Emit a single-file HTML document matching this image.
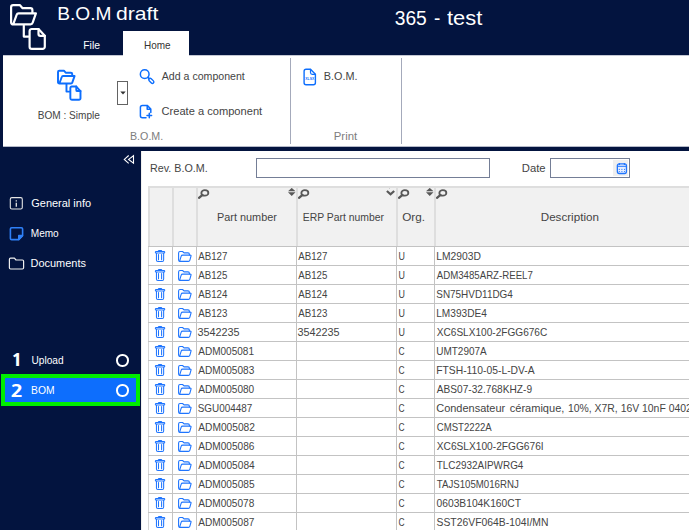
<!DOCTYPE html>
<html><head><meta charset="utf-8"><title>B.O.M draft</title>
<style>
html,body{margin:0;padding:0}
body{width:689px;height:530px;overflow:hidden;background:#03143f;position:relative;font-family:"Liberation Sans",sans-serif;}
.a{position:absolute;display:block}
.t{position:absolute;white-space:nowrap;transform-origin:0 50%;}
</style></head><body>
<!-- active tab -->
<div class="a" style="left:123px;top:31px;width:66px;height:25px;background:#fff"></div>
<!-- ribbon -->
<div class="a" style="left:3px;top:55px;width:686px;height:92px;background:#fff;box-sizing:border-box;border-top:1px solid #c4c8d4;border-bottom:1px solid #b4b9c8"></div>
<div class="a" style="left:123px;top:55px;width:66px;height:1px;background:#fff"></div>
<div class="a" style="left:290px;top:58px;width:1px;height:86px;background:#a4aabb"></div>
<div class="a" style="left:401px;top:58px;width:1px;height:86px;background:#a4aabb"></div>
<!-- dropdown button -->
<div class="a" style="left:117px;top:81px;width:11px;height:24px;box-sizing:border-box;border:1px solid #636363;background:#fff"></div>
<svg class="a" style="left:119.600px;top:91px" width="6" height="4" viewBox="0 0 6 4"><path d="M.3 .6h5.400L3 3.400z" fill="#333"/></svg>
<!-- main content -->
<div class="a" style="left:141px;top:151px;width:548px;height:379px;background:#fff;box-sizing:border-box;border-left:1px solid #f0f0ee"></div>
<div class="a" style="left:256px;top:158px;width:234px;height:20px;box-sizing:border-box;border:1px solid #747e96;background:#fff"></div>
<div class="a" style="left:550px;top:158px;width:80px;height:20px;box-sizing:border-box;border:1px solid #747e96;background:#fff"></div>
<div class="a" style="left:613px;top:160px;width:15px;height:16px;background:#efefef"></div>
<!-- table header -->
<div class="a" style="left:148px;top:186px;width:541px;height:60px;background:#dedede"></div>
<div class="a" style="left:150px;top:188px;width:22px;height:58px;background:#f1f1f1"></div>
<div class="a" style="left:174px;top:188px;width:22px;height:58px;background:#f1f1f1"></div>
<div class="a" style="left:198px;top:188px;width:98px;height:58px;background:#f1f1f1"></div>
<div class="a" style="left:298px;top:188px;width:98px;height:58px;background:#f1f1f1"></div>
<div class="a" style="left:398px;top:188px;width:36px;height:58px;background:#f1f1f1"></div>
<div class="a" style="left:436px;top:188px;width:253px;height:58px;background:#f1f1f1"></div>
<div class="a" style="left:148px;top:246px;width:1px;height:284px;background:#d6d6d6"></div>
<div class="a" style="left:172px;top:246px;width:1px;height:284px;background:#c3c3c3"></div>
<div class="a" style="left:196px;top:246px;width:1px;height:284px;background:#c3c3c3"></div>
<div class="a" style="left:296px;top:246px;width:1px;height:284px;background:#c3c3c3"></div>
<div class="a" style="left:396px;top:246px;width:1px;height:284px;background:#c3c3c3"></div>
<div class="a" style="left:434px;top:246px;width:1px;height:284px;background:#c3c3c3"></div>
<div class="a" style="left:148px;top:246px;width:541px;height:1px;background:#c3c3c3"></div>
<div class="a" style="left:148px;top:265px;width:541px;height:1px;background:#c3c3c3"></div>
<div class="a" style="left:148px;top:284px;width:541px;height:1px;background:#c3c3c3"></div>
<div class="a" style="left:148px;top:303px;width:541px;height:1px;background:#c3c3c3"></div>
<div class="a" style="left:148px;top:322px;width:541px;height:1px;background:#c3c3c3"></div>
<div class="a" style="left:148px;top:341px;width:541px;height:1px;background:#c3c3c3"></div>
<div class="a" style="left:148px;top:360px;width:541px;height:1px;background:#c3c3c3"></div>
<div class="a" style="left:148px;top:379px;width:541px;height:1px;background:#c3c3c3"></div>
<div class="a" style="left:148px;top:398px;width:541px;height:1px;background:#c3c3c3"></div>
<div class="a" style="left:148px;top:417px;width:541px;height:1px;background:#c3c3c3"></div>
<div class="a" style="left:148px;top:436px;width:541px;height:1px;background:#c3c3c3"></div>
<div class="a" style="left:148px;top:455px;width:541px;height:1px;background:#c3c3c3"></div>
<div class="a" style="left:148px;top:474px;width:541px;height:1px;background:#c3c3c3"></div>
<div class="a" style="left:148px;top:493px;width:541px;height:1px;background:#c3c3c3"></div>
<div class="a" style="left:148px;top:512px;width:541px;height:1px;background:#c3c3c3"></div>
<div class="a" style="left:148px;top:531px;width:541px;height:1px;background:#c3c3c3"></div>
<!-- sidebar selection -->
<div class="a" style="left:1px;top:374px;width:139px;height:32px;box-sizing:border-box;border:4px solid #00ee00;background:#0d6efd"></div>
<div class="a" style="left:116.400px;top:354.400px;width:12.400px;height:12.400px;box-sizing:border-box;border:2px solid #fff;border-radius:50%"></div>
<div class="a" style="left:116.400px;top:384.200px;width:12.400px;height:12.400px;box-sizing:border-box;border:2px solid #fff;border-radius:50%"></div>
<svg class="a" style="left:0;top:0" width="120" height="110" viewBox="0 0 120 110" fill="none" stroke="#fff" stroke-width="2.2" stroke-linejoin="round" stroke-linecap="round"><g transform="translate(0 0) scale(1)">
<path d="M32.4 12.3 V10.2 a2 2 0 0 0 -2 -2 H22.6 L20 5.200 H13.100 a2 2 0 0 0 -2 2 V22.400 a2 2 0 0 0 2.100 2 L16.700 14.700 a2 2 0 0 1 1.900 -1.400 H35.900 L32.600 22.800 a2.200 2.200 0 0 1 -2.100 1.600 H13.200"/>
<path d="M23.800 25.500 V36.600 H28.500"/>
<path d="M38.500 29 H31.800 a2.200 2.200 0 0 0 -2.200 2.200 V46.700 a2.200 2.200 0 0 0 2.200 2.200 H42.600 a2.200 2.200 0 0 0 2.200 -2.200 V35.800 Z"/>
<path d="M38.500 29 V34 a1.800 1.800 0 0 0 1.800 1.800 H44.800"/>
</g></svg>
<svg class="a" style="left:0;top:0" width="120" height="110" viewBox="0 0 120 110" fill="none" stroke="#0d6efd" stroke-width="2.9" stroke-linejoin="round" stroke-linecap="round"><g transform="translate(50.6 67.2) scale(0.667)">
<path d="M32.4 12.3 V10.2 a2 2 0 0 0 -2 -2 H22.6 L20 5.200 H13.100 a2 2 0 0 0 -2 2 V22.400 a2 2 0 0 0 2.100 2 L16.700 14.700 a2 2 0 0 1 1.900 -1.400 H35.900 L32.600 22.800 a2.200 2.200 0 0 1 -2.100 1.600 H13.200"/>
<path d="M23.800 25.500 V36.600 H28.500"/>
<path d="M38.500 29 H31.800 a2.200 2.200 0 0 0 -2.200 2.200 V46.700 a2.200 2.200 0 0 0 2.200 2.200 H42.600 a2.200 2.200 0 0 0 2.200 -2.200 V35.800 Z"/>
<path d="M38.500 29 V34 a1.800 1.800 0 0 0 1.800 1.800 H44.800"/>
</g></svg>
<svg class="a" style="left:137.500px;top:68px" width="18" height="18" viewBox="0 0 18 18" fill="none" stroke="#0d6efd" stroke-width="1.500" stroke-linecap="round"><circle cx="6.700" cy="6.200" r="4.350"/><path d="M9.900 9.400l1.300 1.300" stroke-width="1.700"/><rect x="-3" y="-1.450" width="6" height="2.900" rx="1.450" stroke-width="1.400" transform="translate(13.300 12.800) rotate(45)"/></svg>
<svg class="a" style="left:139px;top:104px" width="15" height="16" viewBox="0 0 15 16" fill="none" stroke="#0d6efd" stroke-width="1.500" stroke-linecap="round" stroke-linejoin="round"><path d="M7 13.800H3.400c-1.200 0-2-.8-2-2V3.400c0-1.200.8-2 2-2h4.800l3.600 3.600v3.400M8.200 1.600v3.600h3.400M10.300 9.200v4.600M8 11.500h4.600"/></svg>
<svg class="a" style="left:302px;top:67.500px" width="16" height="18" viewBox="0 0 16 18" fill="none" stroke="#0d6efd" stroke-width="1.400" stroke-linecap="round" stroke-linejoin="round"><path d="M8.500 1.300H4.100c-1.300 0-2 .7-2 2V14.700c0 1.300.7 2 2 2h7.300c1.300 0 2-.7 2-2V6.300z"/><path d="M8.500 1.300v3.200c0 1.200.6 1.800 1.800 1.800h3.100" stroke-width="1.200"/><text x="3.300" y="12" font-family="Liberation Sans, sans-serif" font-size="3.600" font-weight="bold" fill="#0d6efd" stroke="none" textLength="8.900" lengthAdjust="spacingAndGlyphs">XLSX</text></svg>
<svg class="a" style="left:123px;top:154px" width="12" height="11" viewBox="0 0 12 11" fill="none" stroke="#fff" stroke-width="1.100" stroke-linejoin="miter"><path d="M5.700 1.500L1.300 5.400L5.700 9.300"/><path d="M10.500 1.700L5.600 5.400L10.500 9.100z"/></svg>
<svg class="a" style="left:9px;top:196px" width="15" height="15" viewBox="0 0 15 15" fill="none" stroke="#e4e4e4" stroke-width="1.100"><rect x="1.300" y="1.600" width="12" height="11.400" rx="1.600"/><path d="M7.300 4.300v1.200M7.300 6.800v4" stroke-width="1.300"/></svg>
<svg class="a" style="left:9px;top:226px" width="15" height="15" viewBox="0 0 15 15" fill="none" stroke="#2f80f7" stroke-width="1.600" stroke-linejoin="round"><path d="M2.600 1.800h9.800c.8 0 1.200.4 1.200 1.200v6.600l-4 4H2.600c-.8 0-1.200-.4-1.200-1.200V3c0-.8.4-1.200 1.200-1.200z"/><path d="M13.400 9.600H9.800v3.800z" fill="#2f80f7"/></svg>
<svg class="a" style="left:8px;top:256px" width="17" height="14" viewBox="0 0 17 14" fill="none" stroke="#f0f0f0" stroke-width="1.200" stroke-linejoin="round"><path d="M1.400 3.400c0-.8.400-1.200 1.200-1.200h3.800l1.600 1.800h6.400c.8 0 1.200.4 1.200 1.200v6.600c0 .8-.4 1.200-1.200 1.200H2.600c-.8 0-1.200-.4-1.200-1.200z"/></svg>
<svg class="a" style="left:615px;top:161px" width="14" height="15" viewBox="0 0 14 15" fill="none" stroke="#1f75fe" stroke-linecap="round"><rect x="2.350" y="2.800" width="9.100" height="9.700" rx="1.900" stroke-width="1.300" fill="#e6eeff"/><path d="M2.600 5.300h8.600" stroke-width="1"/><path d="M4.400 2.500v1M9.400 2.500v1" stroke-width="1.200"/><g fill="#1f75fe" stroke="none"><circle cx="4.300" cy="8.300" r=".6"/><circle cx="6.900" cy="8.300" r=".6"/><circle cx="9.500" cy="8.300" r=".6"/><circle cx="4.300" cy="10.500" r=".6"/><circle cx="6.900" cy="10.500" r=".6"/><circle cx="9.500" cy="10.500" r=".6"/></g></svg>
<svg class="a" style="left:154px;top:249px" width="12" height="14" viewBox="0 0 12 14" fill="none" stroke="#1f75fe" stroke-width="1.050" stroke-linecap="round" stroke-linejoin="round"><path d="M4.300 2.500v-.2c0-.5.300-.8.800-.8h1.900c.5 0 .8.300.8.800v.2"/><rect x="1.350" y="2.550" width="9.400" height="1.500" rx=".75"/><path d="M2.450 4.300V11.100c0 .9.500 1.400 1.400 1.400h4.400c.9 0 1.400-.5 1.400-1.400V4.300M4.500 5.600v5.200M7.600 5.600v5.200"/></svg>
<svg class="a" style="left:177px;top:249px" width="16" height="14" viewBox="0 0 16 14" fill="none" stroke="#1f75fe" stroke-width="1.100" stroke-linecap="round" stroke-linejoin="round"><path d="M3 12.400c-.9 0-1.400-.5-1.400-1.400V3.900c0-.9.5-1.400 1.400-1.400h2.600l1.400 1.400h4c.9 0 1.400.5 1.400 1.400v.7"/><path d="M3 12.400h8.400c.8 0 1.200-.3 1.400-1l1.200-4.200c.2-.7-.1-1.100-.8-1.100H5.600c-.8 0-1.200.3-1.400 1L2.700 11.800"/></svg>
<svg class="a" style="left:154px;top:268px" width="12" height="14" viewBox="0 0 12 14" fill="none" stroke="#1f75fe" stroke-width="1.050" stroke-linecap="round" stroke-linejoin="round"><path d="M4.300 2.500v-.2c0-.5.300-.8.800-.8h1.900c.5 0 .8.300.8.800v.2"/><rect x="1.350" y="2.550" width="9.400" height="1.500" rx=".75"/><path d="M2.450 4.300V11.100c0 .9.500 1.400 1.400 1.400h4.400c.9 0 1.400-.5 1.400-1.400V4.300M4.500 5.600v5.200M7.600 5.600v5.200"/></svg>
<svg class="a" style="left:177px;top:268px" width="16" height="14" viewBox="0 0 16 14" fill="none" stroke="#1f75fe" stroke-width="1.100" stroke-linecap="round" stroke-linejoin="round"><path d="M3 12.400c-.9 0-1.400-.5-1.400-1.400V3.900c0-.9.5-1.400 1.400-1.400h2.600l1.400 1.400h4c.9 0 1.400.5 1.400 1.400v.7"/><path d="M3 12.400h8.400c.8 0 1.200-.3 1.400-1l1.200-4.200c.2-.7-.1-1.100-.8-1.100H5.600c-.8 0-1.200.3-1.400 1L2.700 11.800"/></svg>
<svg class="a" style="left:154px;top:287px" width="12" height="14" viewBox="0 0 12 14" fill="none" stroke="#1f75fe" stroke-width="1.050" stroke-linecap="round" stroke-linejoin="round"><path d="M4.300 2.500v-.2c0-.5.300-.8.800-.8h1.900c.5 0 .8.300.8.800v.2"/><rect x="1.350" y="2.550" width="9.400" height="1.500" rx=".75"/><path d="M2.450 4.300V11.100c0 .9.500 1.400 1.400 1.400h4.400c.9 0 1.400-.5 1.400-1.400V4.300M4.500 5.600v5.200M7.600 5.600v5.200"/></svg>
<svg class="a" style="left:177px;top:287px" width="16" height="14" viewBox="0 0 16 14" fill="none" stroke="#1f75fe" stroke-width="1.100" stroke-linecap="round" stroke-linejoin="round"><path d="M3 12.400c-.9 0-1.400-.5-1.400-1.400V3.900c0-.9.5-1.400 1.400-1.400h2.600l1.400 1.400h4c.9 0 1.400.5 1.400 1.400v.7"/><path d="M3 12.400h8.400c.8 0 1.200-.3 1.400-1l1.200-4.200c.2-.7-.1-1.100-.8-1.100H5.600c-.8 0-1.200.3-1.400 1L2.700 11.800"/></svg>
<svg class="a" style="left:154px;top:306px" width="12" height="14" viewBox="0 0 12 14" fill="none" stroke="#1f75fe" stroke-width="1.050" stroke-linecap="round" stroke-linejoin="round"><path d="M4.300 2.500v-.2c0-.5.300-.8.800-.8h1.900c.5 0 .8.300.8.800v.2"/><rect x="1.350" y="2.550" width="9.400" height="1.500" rx=".75"/><path d="M2.450 4.300V11.100c0 .9.500 1.400 1.400 1.400h4.400c.9 0 1.400-.5 1.400-1.400V4.300M4.500 5.600v5.200M7.600 5.600v5.200"/></svg>
<svg class="a" style="left:177px;top:306px" width="16" height="14" viewBox="0 0 16 14" fill="none" stroke="#1f75fe" stroke-width="1.100" stroke-linecap="round" stroke-linejoin="round"><path d="M3 12.400c-.9 0-1.400-.5-1.400-1.400V3.900c0-.9.5-1.400 1.400-1.400h2.600l1.400 1.400h4c.9 0 1.400.5 1.400 1.400v.7"/><path d="M3 12.400h8.400c.8 0 1.200-.3 1.400-1l1.200-4.200c.2-.7-.1-1.100-.8-1.100H5.600c-.8 0-1.200.3-1.400 1L2.700 11.800"/></svg>
<svg class="a" style="left:154px;top:325px" width="12" height="14" viewBox="0 0 12 14" fill="none" stroke="#1f75fe" stroke-width="1.050" stroke-linecap="round" stroke-linejoin="round"><path d="M4.300 2.500v-.2c0-.5.300-.8.800-.8h1.900c.5 0 .8.300.8.800v.2"/><rect x="1.350" y="2.550" width="9.400" height="1.500" rx=".75"/><path d="M2.450 4.300V11.100c0 .9.500 1.400 1.400 1.400h4.400c.9 0 1.400-.5 1.400-1.400V4.300M4.500 5.600v5.200M7.600 5.600v5.200"/></svg>
<svg class="a" style="left:177px;top:325px" width="16" height="14" viewBox="0 0 16 14" fill="none" stroke="#1f75fe" stroke-width="1.100" stroke-linecap="round" stroke-linejoin="round"><path d="M3 12.400c-.9 0-1.400-.5-1.400-1.400V3.900c0-.9.5-1.400 1.400-1.400h2.600l1.400 1.400h4c.9 0 1.400.5 1.400 1.400v.7"/><path d="M3 12.400h8.400c.8 0 1.200-.3 1.400-1l1.200-4.200c.2-.7-.1-1.100-.8-1.100H5.600c-.8 0-1.200.3-1.400 1L2.700 11.800"/></svg>
<svg class="a" style="left:154px;top:344px" width="12" height="14" viewBox="0 0 12 14" fill="none" stroke="#1f75fe" stroke-width="1.050" stroke-linecap="round" stroke-linejoin="round"><path d="M4.300 2.500v-.2c0-.5.300-.8.800-.8h1.900c.5 0 .8.300.8.800v.2"/><rect x="1.350" y="2.550" width="9.400" height="1.500" rx=".75"/><path d="M2.450 4.300V11.100c0 .9.500 1.400 1.400 1.400h4.400c.9 0 1.400-.5 1.400-1.400V4.300M4.500 5.600v5.200M7.600 5.600v5.200"/></svg>
<svg class="a" style="left:177px;top:344px" width="16" height="14" viewBox="0 0 16 14" fill="none" stroke="#1f75fe" stroke-width="1.100" stroke-linecap="round" stroke-linejoin="round"><path d="M3 12.400c-.9 0-1.400-.5-1.400-1.400V3.900c0-.9.5-1.400 1.400-1.400h2.600l1.400 1.400h4c.9 0 1.400.5 1.400 1.400v.7"/><path d="M3 12.400h8.400c.8 0 1.200-.3 1.400-1l1.200-4.200c.2-.7-.1-1.100-.8-1.100H5.600c-.8 0-1.200.3-1.400 1L2.700 11.800"/></svg>
<svg class="a" style="left:154px;top:363px" width="12" height="14" viewBox="0 0 12 14" fill="none" stroke="#1f75fe" stroke-width="1.050" stroke-linecap="round" stroke-linejoin="round"><path d="M4.300 2.500v-.2c0-.5.300-.8.800-.8h1.900c.5 0 .8.300.8.800v.2"/><rect x="1.350" y="2.550" width="9.400" height="1.500" rx=".75"/><path d="M2.450 4.300V11.100c0 .9.500 1.400 1.400 1.400h4.400c.9 0 1.400-.5 1.400-1.400V4.300M4.500 5.600v5.200M7.600 5.600v5.200"/></svg>
<svg class="a" style="left:177px;top:363px" width="16" height="14" viewBox="0 0 16 14" fill="none" stroke="#1f75fe" stroke-width="1.100" stroke-linecap="round" stroke-linejoin="round"><path d="M3 12.400c-.9 0-1.400-.5-1.400-1.400V3.900c0-.9.5-1.400 1.400-1.400h2.600l1.400 1.400h4c.9 0 1.400.5 1.400 1.400v.7"/><path d="M3 12.400h8.400c.8 0 1.200-.3 1.400-1l1.200-4.200c.2-.7-.1-1.100-.8-1.100H5.600c-.8 0-1.200.3-1.400 1L2.700 11.800"/></svg>
<svg class="a" style="left:154px;top:382px" width="12" height="14" viewBox="0 0 12 14" fill="none" stroke="#1f75fe" stroke-width="1.050" stroke-linecap="round" stroke-linejoin="round"><path d="M4.300 2.500v-.2c0-.5.300-.8.800-.8h1.900c.5 0 .8.300.8.800v.2"/><rect x="1.350" y="2.550" width="9.400" height="1.500" rx=".75"/><path d="M2.450 4.300V11.100c0 .9.500 1.400 1.400 1.400h4.400c.9 0 1.400-.5 1.400-1.400V4.300M4.500 5.600v5.200M7.600 5.600v5.200"/></svg>
<svg class="a" style="left:177px;top:382px" width="16" height="14" viewBox="0 0 16 14" fill="none" stroke="#1f75fe" stroke-width="1.100" stroke-linecap="round" stroke-linejoin="round"><path d="M3 12.400c-.9 0-1.400-.5-1.400-1.400V3.900c0-.9.5-1.400 1.400-1.400h2.600l1.400 1.400h4c.9 0 1.400.5 1.400 1.400v.7"/><path d="M3 12.400h8.400c.8 0 1.200-.3 1.400-1l1.200-4.200c.2-.7-.1-1.100-.8-1.100H5.600c-.8 0-1.200.3-1.400 1L2.700 11.800"/></svg>
<svg class="a" style="left:154px;top:401px" width="12" height="14" viewBox="0 0 12 14" fill="none" stroke="#1f75fe" stroke-width="1.050" stroke-linecap="round" stroke-linejoin="round"><path d="M4.300 2.500v-.2c0-.5.300-.8.800-.8h1.900c.5 0 .8.300.8.800v.2"/><rect x="1.350" y="2.550" width="9.400" height="1.500" rx=".75"/><path d="M2.450 4.300V11.100c0 .9.500 1.400 1.400 1.400h4.400c.9 0 1.400-.5 1.400-1.400V4.300M4.500 5.600v5.200M7.600 5.600v5.200"/></svg>
<svg class="a" style="left:177px;top:401px" width="16" height="14" viewBox="0 0 16 14" fill="none" stroke="#1f75fe" stroke-width="1.100" stroke-linecap="round" stroke-linejoin="round"><path d="M3 12.400c-.9 0-1.400-.5-1.400-1.400V3.900c0-.9.5-1.400 1.400-1.400h2.600l1.400 1.400h4c.9 0 1.400.5 1.400 1.400v.7"/><path d="M3 12.400h8.400c.8 0 1.200-.3 1.400-1l1.200-4.200c.2-.7-.1-1.100-.8-1.100H5.600c-.8 0-1.200.3-1.400 1L2.700 11.800"/></svg>
<svg class="a" style="left:154px;top:420px" width="12" height="14" viewBox="0 0 12 14" fill="none" stroke="#1f75fe" stroke-width="1.050" stroke-linecap="round" stroke-linejoin="round"><path d="M4.300 2.500v-.2c0-.5.300-.8.800-.8h1.900c.5 0 .8.300.8.800v.2"/><rect x="1.350" y="2.550" width="9.400" height="1.500" rx=".75"/><path d="M2.450 4.300V11.100c0 .9.500 1.400 1.400 1.400h4.400c.9 0 1.400-.5 1.400-1.400V4.300M4.500 5.600v5.200M7.600 5.600v5.200"/></svg>
<svg class="a" style="left:177px;top:420px" width="16" height="14" viewBox="0 0 16 14" fill="none" stroke="#1f75fe" stroke-width="1.100" stroke-linecap="round" stroke-linejoin="round"><path d="M3 12.400c-.9 0-1.400-.5-1.400-1.400V3.900c0-.9.5-1.400 1.400-1.400h2.600l1.400 1.400h4c.9 0 1.400.5 1.400 1.400v.7"/><path d="M3 12.400h8.400c.8 0 1.200-.3 1.400-1l1.200-4.200c.2-.7-.1-1.100-.8-1.100H5.600c-.8 0-1.200.3-1.400 1L2.700 11.800"/></svg>
<svg class="a" style="left:154px;top:439px" width="12" height="14" viewBox="0 0 12 14" fill="none" stroke="#1f75fe" stroke-width="1.050" stroke-linecap="round" stroke-linejoin="round"><path d="M4.300 2.500v-.2c0-.5.300-.8.800-.8h1.900c.5 0 .8.300.8.800v.2"/><rect x="1.350" y="2.550" width="9.400" height="1.500" rx=".75"/><path d="M2.450 4.300V11.100c0 .9.500 1.400 1.400 1.400h4.400c.9 0 1.400-.5 1.400-1.400V4.300M4.500 5.600v5.200M7.600 5.600v5.200"/></svg>
<svg class="a" style="left:177px;top:439px" width="16" height="14" viewBox="0 0 16 14" fill="none" stroke="#1f75fe" stroke-width="1.100" stroke-linecap="round" stroke-linejoin="round"><path d="M3 12.400c-.9 0-1.400-.5-1.400-1.400V3.900c0-.9.5-1.400 1.400-1.400h2.600l1.400 1.400h4c.9 0 1.400.5 1.400 1.400v.7"/><path d="M3 12.400h8.400c.8 0 1.200-.3 1.400-1l1.200-4.200c.2-.7-.1-1.100-.8-1.100H5.600c-.8 0-1.200.3-1.400 1L2.700 11.800"/></svg>
<svg class="a" style="left:154px;top:458px" width="12" height="14" viewBox="0 0 12 14" fill="none" stroke="#1f75fe" stroke-width="1.050" stroke-linecap="round" stroke-linejoin="round"><path d="M4.300 2.500v-.2c0-.5.300-.8.800-.8h1.900c.5 0 .8.300.8.800v.2"/><rect x="1.350" y="2.550" width="9.400" height="1.500" rx=".75"/><path d="M2.450 4.300V11.100c0 .9.500 1.400 1.400 1.400h4.400c.9 0 1.400-.5 1.400-1.400V4.300M4.500 5.600v5.200M7.600 5.600v5.200"/></svg>
<svg class="a" style="left:177px;top:458px" width="16" height="14" viewBox="0 0 16 14" fill="none" stroke="#1f75fe" stroke-width="1.100" stroke-linecap="round" stroke-linejoin="round"><path d="M3 12.400c-.9 0-1.400-.5-1.400-1.400V3.900c0-.9.5-1.400 1.400-1.400h2.600l1.400 1.400h4c.9 0 1.400.5 1.400 1.400v.7"/><path d="M3 12.400h8.400c.8 0 1.200-.3 1.400-1l1.200-4.200c.2-.7-.1-1.100-.8-1.100H5.600c-.8 0-1.200.3-1.400 1L2.700 11.800"/></svg>
<svg class="a" style="left:154px;top:477px" width="12" height="14" viewBox="0 0 12 14" fill="none" stroke="#1f75fe" stroke-width="1.050" stroke-linecap="round" stroke-linejoin="round"><path d="M4.300 2.500v-.2c0-.5.300-.8.800-.8h1.900c.5 0 .8.300.8.800v.2"/><rect x="1.350" y="2.550" width="9.400" height="1.500" rx=".75"/><path d="M2.450 4.300V11.100c0 .9.500 1.400 1.400 1.400h4.400c.9 0 1.400-.5 1.400-1.400V4.300M4.500 5.600v5.200M7.600 5.600v5.200"/></svg>
<svg class="a" style="left:177px;top:477px" width="16" height="14" viewBox="0 0 16 14" fill="none" stroke="#1f75fe" stroke-width="1.100" stroke-linecap="round" stroke-linejoin="round"><path d="M3 12.400c-.9 0-1.400-.5-1.400-1.400V3.900c0-.9.5-1.400 1.400-1.400h2.600l1.400 1.400h4c.9 0 1.400.5 1.400 1.400v.7"/><path d="M3 12.400h8.400c.8 0 1.200-.3 1.400-1l1.200-4.200c.2-.7-.1-1.100-.8-1.100H5.600c-.8 0-1.200.3-1.400 1L2.700 11.800"/></svg>
<svg class="a" style="left:154px;top:496px" width="12" height="14" viewBox="0 0 12 14" fill="none" stroke="#1f75fe" stroke-width="1.050" stroke-linecap="round" stroke-linejoin="round"><path d="M4.300 2.500v-.2c0-.5.300-.8.800-.8h1.900c.5 0 .8.300.8.800v.2"/><rect x="1.350" y="2.550" width="9.400" height="1.500" rx=".75"/><path d="M2.450 4.300V11.100c0 .9.500 1.400 1.400 1.400h4.400c.9 0 1.400-.5 1.400-1.400V4.300M4.500 5.600v5.200M7.600 5.600v5.200"/></svg>
<svg class="a" style="left:177px;top:496px" width="16" height="14" viewBox="0 0 16 14" fill="none" stroke="#1f75fe" stroke-width="1.100" stroke-linecap="round" stroke-linejoin="round"><path d="M3 12.400c-.9 0-1.400-.5-1.400-1.400V3.900c0-.9.5-1.400 1.400-1.400h2.600l1.400 1.400h4c.9 0 1.400.5 1.400 1.400v.7"/><path d="M3 12.400h8.400c.8 0 1.200-.3 1.400-1l1.200-4.200c.2-.7-.1-1.100-.8-1.100H5.600c-.8 0-1.200.3-1.400 1L2.700 11.800"/></svg>
<svg class="a" style="left:154px;top:515px" width="12" height="14" viewBox="0 0 12 14" fill="none" stroke="#1f75fe" stroke-width="1.050" stroke-linecap="round" stroke-linejoin="round"><path d="M4.300 2.500v-.2c0-.5.300-.8.800-.8h1.900c.5 0 .8.300.8.800v.2"/><rect x="1.350" y="2.550" width="9.400" height="1.500" rx=".75"/><path d="M2.450 4.300V11.100c0 .9.500 1.400 1.400 1.400h4.400c.9 0 1.400-.5 1.400-1.400V4.300M4.500 5.600v5.200M7.600 5.600v5.200"/></svg>
<svg class="a" style="left:177px;top:515px" width="16" height="14" viewBox="0 0 16 14" fill="none" stroke="#1f75fe" stroke-width="1.100" stroke-linecap="round" stroke-linejoin="round"><path d="M3 12.400c-.9 0-1.400-.5-1.400-1.400V3.900c0-.9.5-1.400 1.400-1.400h2.600l1.400 1.400h4c.9 0 1.400.5 1.400 1.400v.7"/><path d="M3 12.400h8.400c.8 0 1.200-.3 1.400-1l1.200-4.200c.2-.7-.1-1.100-.8-1.100H5.600c-.8 0-1.200.3-1.400 1L2.700 11.800"/></svg>
<svg class="a" style="left:198px;top:189px" width="12" height="11" viewBox="0 0 12 11" fill="none" stroke="#585858"><ellipse cx="6.850" cy="3.900" rx="3.500" ry="2.800" stroke-width="1.800"/><path d="M4.500 5.900L1 8.900" stroke-width="2.200" stroke-linecap="round"/></svg>
<svg class="a" style="left:298px;top:189px" width="12" height="11" viewBox="0 0 12 11" fill="none" stroke="#585858"><ellipse cx="6.850" cy="3.900" rx="3.500" ry="2.800" stroke-width="1.800"/><path d="M4.500 5.900L1 8.900" stroke-width="2.200" stroke-linecap="round"/></svg>
<svg class="a" style="left:398px;top:189px" width="12" height="11" viewBox="0 0 12 11" fill="none" stroke="#585858"><ellipse cx="6.850" cy="3.900" rx="3.500" ry="2.800" stroke-width="1.800"/><path d="M4.500 5.900L1 8.900" stroke-width="2.200" stroke-linecap="round"/></svg>
<svg class="a" style="left:436px;top:189px" width="12" height="11" viewBox="0 0 12 11" fill="none" stroke="#585858"><ellipse cx="6.850" cy="3.900" rx="3.500" ry="2.800" stroke-width="1.800"/><path d="M4.500 5.900L1 8.900" stroke-width="2.200" stroke-linecap="round"/></svg>
<svg class="a" style="left:287.9px;top:188px" width="8" height="9" viewBox="0 0 8 9" fill="#585858"><path d="M3.750 -.1L7.500 3.150H0zM0 4.250H7.500L3.750 8z"/></svg>
<svg class="a" style="left:386px;top:188px" width="10" height="9" viewBox="0 0 10 9" fill="none" stroke="#585858" stroke-width="2.200" stroke-linecap="butt" stroke-linejoin="miter"><path d="M.9 3L4.550 6.300L8.200 3"/><circle cx="3.400" cy=".6" r=".45" fill="#999" stroke="none"/></svg>
<svg class="a" style="left:425.9px;top:188px" width="8" height="9" viewBox="0 0 8 9" fill="#585858"><path d="M3.750 -.1L7.500 3.150H0zM0 4.250H7.500L3.750 8z"/></svg>
<span class="t" id="t0" style="left:57px;top:3px;font-size:18.5px;line-height:22px;color:#fff;transform:translateX(0.25px) scaleX(1.0351);">B.O.M</span>
<span class="t" id="t1" style="left:116px;top:3px;font-size:18.5px;line-height:22px;color:#fff;transform:translateX(0px) scaleX(1.1426);">draft</span>
<span class="t" id="t2" style="left:394px;top:7px;font-size:19.5px;line-height:23px;color:#fff;transform:translateX(0.75px) scaleX(0.9853);">365</span>
<span class="t" id="t3" style="left:433px;top:7px;font-size:19.5px;line-height:23px;color:#fff;transform:translateX(1px) scaleX(0.9735);">-</span>
<span class="t" id="t4" style="left:447px;top:7px;font-size:19.5px;line-height:23px;color:#fff;transform:translateX(0px) scaleX(1.1231);">test</span>
<span class="t" id="t5" style="left:83px;top:39px;font-size:11px;line-height:13px;color:#fff;transform:translateX(0.25px) scaleX(0.9441);">File</span>
<span class="t" id="t6" style="left:143px;top:39px;font-size:11px;line-height:13px;color:#333;transform:translateX(1px) scaleX(0.9070);">Home</span>
<span class="t" id="t7" style="left:37px;top:109px;font-size:11px;line-height:13px;color:#444444;transform:translateX(0.75px) scaleX(0.9158);">BOM : Simple</span>
<span class="t" id="t8" style="left:161px;top:70px;font-size:11px;line-height:13px;color:#444444;transform:translateX(0.75px) scaleX(0.9632);">Add a component</span>
<span class="t" id="t9" style="left:161px;top:105px;font-size:11px;line-height:13px;color:#444444;transform:translateX(0.5px) scaleX(1.0098);">Create a component</span>
<span class="t" id="t10" style="left:129px;top:130px;font-size:11px;line-height:13px;color:#7d7d7d;transform:translateX(1px) scaleX(0.9708);">B.O.M.</span>
<span class="t" id="t11" style="left:323px;top:70px;font-size:11px;line-height:13px;color:#444444;transform:translateX(0.75px) scaleX(0.9847);">B.O.M.</span>
<span class="t" id="t12" style="left:333px;top:130px;font-size:11px;line-height:13px;color:#7d7d7d;transform:translateX(0.75px) scaleX(1.0361);">Print</span>
<span class="t" id="t13" style="left:31px;top:197px;font-size:11px;line-height:13px;color:#fff;transform:translateX(0.25px) scaleX(0.9977);">General info</span>
<span class="t" id="t14" style="left:30px;top:227px;font-size:11px;line-height:13px;color:#fff;transform:translateX(0.75px) scaleX(0.9152);">Memo</span>
<span class="t" id="t15" style="left:30px;top:257px;font-size:11px;line-height:13px;color:#fff;transform:translateX(0.5px) scaleX(0.9961);">Documents</span>
<span class="t" id="t16" style="left:10px;top:350px;font-size:17.5px;line-height:21px;color:#fff;font-weight:800;font-family:NanumGothic,'Liberation Sans',sans-serif;transform:translateX(1px) scaleX(1.1572);">1</span>
<span class="t" id="t17" style="left:31px;top:354px;font-size:11px;line-height:13px;color:#fff;transform:translateX(0.5px) scaleX(0.9210);">Upload</span>
<span class="t" id="t18" style="left:10px;top:381px;font-size:17.5px;line-height:21px;color:#fff;font-weight:800;font-family:NanumGothic,'Liberation Sans',sans-serif;transform:translateX(0.5px) scaleX(1.2032);">2</span>
<span class="t" id="t19" style="left:31px;top:384px;font-size:11px;line-height:13px;color:#fff;transform:translateX(0px) scaleX(0.9373);">BOM</span>
<span class="t" id="t20" style="left:150px;top:162px;font-size:11px;line-height:13px;color:#444444;transform:translateX(0px) scaleX(0.9760);">Rev. B.O.M.</span>
<span class="t" id="t21" style="left:521px;top:162px;font-size:11px;line-height:13px;color:#444444;transform:translateX(0.75px) scaleX(1.0243);">Date</span>
<span class="t" id="t22" style="left:216px;top:211px;font-size:11px;line-height:13px;color:#444444;transform:translateX(1px) scaleX(0.9896);">Part number</span>
<span class="t" id="t23" style="left:302px;top:211px;font-size:11px;line-height:13px;color:#444444;transform:translateX(0.75px) scaleX(0.9452);">ERP Part number</span>
<span class="t" id="t24" style="left:402px;top:211px;font-size:11px;line-height:13px;color:#444444;transform:translateX(0.25px) scaleX(1.0644);">Org.</span>
<span class="t" id="t25" style="left:540px;top:211px;font-size:11px;line-height:13px;color:#444444;transform:translateX(0.75px) scaleX(1.0569);">Description</span>
<span class="t" id="t26" style="left:198px;top:250px;font-size:11px;line-height:13px;color:#444444;transform:translateX(0.25px) scaleX(0.8805);">AB127</span>
<span class="t" id="t27" style="left:298px;top:250px;font-size:11px;line-height:13px;color:#444444;transform:translateX(0.25px) scaleX(0.8805);">AB127</span>
<span class="t" id="t28" style="left:398px;top:250px;font-size:11px;line-height:13px;color:#444444;transform:translateX(0.5px) scaleX(0.8086);">U</span>
<span class="t" id="t29" style="left:436px;top:250px;font-size:11px;line-height:13px;color:#444444;transform:translateX(0.25px) scaleX(0.9354);">LM2903D</span>
<span class="t" id="t30" style="left:198px;top:269px;font-size:11px;line-height:13px;color:#444444;transform:translateX(0.25px) scaleX(0.8786);">AB125</span>
<span class="t" id="t31" style="left:298px;top:269px;font-size:11px;line-height:13px;color:#444444;transform:translateX(0.25px) scaleX(0.8786);">AB125</span>
<span class="t" id="t32" style="left:398px;top:269px;font-size:11px;line-height:13px;color:#444444;transform:translateX(0.5px) scaleX(0.8086);">U</span>
<span class="t" id="t33" style="left:436px;top:269px;font-size:11px;line-height:13px;color:#444444;transform:translateX(0.75px) scaleX(0.8778);">ADM3485ARZ-REEL7</span>
<span class="t" id="t34" style="left:198px;top:288px;font-size:11px;line-height:13px;color:#444444;transform:translateX(0.25px) scaleX(0.8805);">AB124</span>
<span class="t" id="t35" style="left:298px;top:288px;font-size:11px;line-height:13px;color:#444444;transform:translateX(0.25px) scaleX(0.8805);">AB124</span>
<span class="t" id="t36" style="left:398px;top:288px;font-size:11px;line-height:13px;color:#444444;transform:translateX(0.5px) scaleX(0.8086);">U</span>
<span class="t" id="t37" style="left:436px;top:288px;font-size:11px;line-height:13px;color:#444444;transform:translateX(0.25px) scaleX(0.9035);">SN75HVD11DG4</span>
<span class="t" id="t38" style="left:198px;top:307px;font-size:11px;line-height:13px;color:#444444;transform:translateX(0.25px) scaleX(0.8794);">AB123</span>
<span class="t" id="t39" style="left:298px;top:307px;font-size:11px;line-height:13px;color:#444444;transform:translateX(0.25px) scaleX(0.8794);">AB123</span>
<span class="t" id="t40" style="left:398px;top:307px;font-size:11px;line-height:13px;color:#444444;transform:translateX(0.5px) scaleX(0.8086);">U</span>
<span class="t" id="t41" style="left:436px;top:307px;font-size:11px;line-height:13px;color:#444444;transform:translateX(0.25px) scaleX(0.9191);">LM393DE4</span>
<span class="t" id="t42" style="left:197px;top:326px;font-size:11px;line-height:13px;color:#444444;transform:translateX(0.5px) scaleX(0.9841);">3542235</span>
<span class="t" id="t43" style="left:297px;top:326px;font-size:11px;line-height:13px;color:#444444;transform:translateX(0.5px) scaleX(0.9841);">3542235</span>
<span class="t" id="t44" style="left:398px;top:326px;font-size:11px;line-height:13px;color:#444444;transform:translateX(0.5px) scaleX(0.8086);">U</span>
<span class="t" id="t45" style="left:436px;top:326px;font-size:11px;line-height:13px;color:#444444;transform:translateX(0.75px) scaleX(0.9175);">XC6SLX100-2FGG676C</span>
<span class="t" id="t46" style="left:198px;top:345px;font-size:11px;line-height:13px;color:#444444;transform:translateX(0.25px) scaleX(0.9110);">ADM005081</span>
<span class="t" id="t47" style="left:398px;top:345px;font-size:11px;line-height:13px;color:#444444;transform:translateX(0.5px) scaleX(0.7654);">C</span>
<span class="t" id="t48" style="left:436px;top:345px;font-size:11px;line-height:13px;color:#444444;transform:translateX(0.25px) scaleX(0.9064);">UMT2907A</span>
<span class="t" id="t49" style="left:198px;top:364px;font-size:11px;line-height:13px;color:#444444;transform:translateX(0.25px) scaleX(0.9163);">ADM005083</span>
<span class="t" id="t50" style="left:398px;top:364px;font-size:11px;line-height:13px;color:#444444;transform:translateX(0.5px) scaleX(0.7654);">C</span>
<span class="t" id="t51" style="left:436px;top:364px;font-size:11px;line-height:13px;color:#444444;transform:translateX(0.25px) scaleX(0.9380);">FTSH-110-05-L-DV-A</span>
<span class="t" id="t52" style="left:198px;top:383px;font-size:11px;line-height:13px;color:#444444;transform:translateX(0.25px) scaleX(0.9151);">ADM005080</span>
<span class="t" id="t53" style="left:398px;top:383px;font-size:11px;line-height:13px;color:#444444;transform:translateX(0.5px) scaleX(0.7654);">C</span>
<span class="t" id="t54" style="left:436px;top:383px;font-size:11px;line-height:13px;color:#444444;transform:translateX(0.75px) scaleX(0.9220);">ABS07-32.768KHZ-9</span>
<span class="t" id="t55" style="left:197px;top:402px;font-size:11px;line-height:13px;color:#444444;transform:translateX(0.75px) scaleX(0.8991);">SGU004487</span>
<span class="t" id="t56" style="left:398px;top:402px;font-size:11px;line-height:13px;color:#444444;transform:translateX(0.5px) scaleX(0.7654);">C</span>
<span class="t" id="t57" style="left:436px;top:402px;font-size:11px;line-height:13px;color:#444444;transform:translateX(0.25px) scaleX(0.9973);">Condensateur</span>
<span class="t" id="t58" style="left:509px;top:402px;font-size:11px;line-height:13px;color:#444444;transform:translateX(0.75px) scaleX(1.0032);">céramique,</span>
<span class="t" id="t59" style="left:567px;top:402px;font-size:11px;line-height:13px;color:#444444;transform:translateX(1px) scaleX(0.9460);">10%, X7R, 16V 10nF 0402</span>
<span class="t" id="t60" style="left:198px;top:421px;font-size:11px;line-height:13px;color:#444444;transform:translateX(0.25px) scaleX(0.9266);">ADM005082</span>
<span class="t" id="t61" style="left:398px;top:421px;font-size:11px;line-height:13px;color:#444444;transform:translateX(0.5px) scaleX(0.7654);">C</span>
<span class="t" id="t62" style="left:436px;top:421px;font-size:11px;line-height:13px;color:#444444;transform:translateX(0.75px) scaleX(0.8735);">CMST2222A</span>
<span class="t" id="t63" style="left:198px;top:440px;font-size:11px;line-height:13px;color:#444444;transform:translateX(0.25px) scaleX(0.9181);">ADM005086</span>
<span class="t" id="t64" style="left:398px;top:440px;font-size:11px;line-height:13px;color:#444444;transform:translateX(0.5px) scaleX(0.7654);">C</span>
<span class="t" id="t65" style="left:436px;top:440px;font-size:11px;line-height:13px;color:#444444;transform:translateX(0.75px) scaleX(0.9251);">XC6SLX100-2FGG676I</span>
<span class="t" id="t66" style="left:198px;top:459px;font-size:11px;line-height:13px;color:#444444;transform:translateX(0.25px) scaleX(0.9227);">ADM005084</span>
<span class="t" id="t67" style="left:398px;top:459px;font-size:11px;line-height:13px;color:#444444;transform:translateX(0.5px) scaleX(0.7654);">C</span>
<span class="t" id="t68" style="left:436px;top:459px;font-size:11px;line-height:13px;color:#444444;transform:translateX(0.75px) scaleX(0.9027);">TLC2932AIPWRG4</span>
<span class="t" id="t69" style="left:198px;top:478px;font-size:11px;line-height:13px;color:#444444;transform:translateX(0.25px) scaleX(0.9202);">ADM005085</span>
<span class="t" id="t70" style="left:398px;top:478px;font-size:11px;line-height:13px;color:#444444;transform:translateX(0.5px) scaleX(0.7654);">C</span>
<span class="t" id="t71" style="left:436px;top:478px;font-size:11px;line-height:13px;color:#444444;transform:translateX(0.75px) scaleX(0.8783);">TAJS105M016RNJ</span>
<span class="t" id="t72" style="left:198px;top:497px;font-size:11px;line-height:13px;color:#444444;transform:translateX(0.25px) scaleX(0.9162);">ADM005078</span>
<span class="t" id="t73" style="left:398px;top:497px;font-size:11px;line-height:13px;color:#444444;transform:translateX(0.5px) scaleX(0.7654);">C</span>
<span class="t" id="t74" style="left:436px;top:497px;font-size:11px;line-height:13px;color:#444444;transform:translateX(0.5px) scaleX(0.9332);">0603B104K160CT</span>
<span class="t" id="t75" style="left:198px;top:516px;font-size:11px;line-height:13px;color:#444444;transform:translateX(0.25px) scaleX(0.9175);">ADM005087</span>
<span class="t" id="t76" style="left:398px;top:516px;font-size:11px;line-height:13px;color:#444444;transform:translateX(0.5px) scaleX(0.7654);">C</span>
<span class="t" id="t77" style="left:436px;top:516px;font-size:11px;line-height:13px;color:#444444;transform:translateX(0.5px) scaleX(0.9437);">SST26VF064B-104I/MN</span>
</body></html>
